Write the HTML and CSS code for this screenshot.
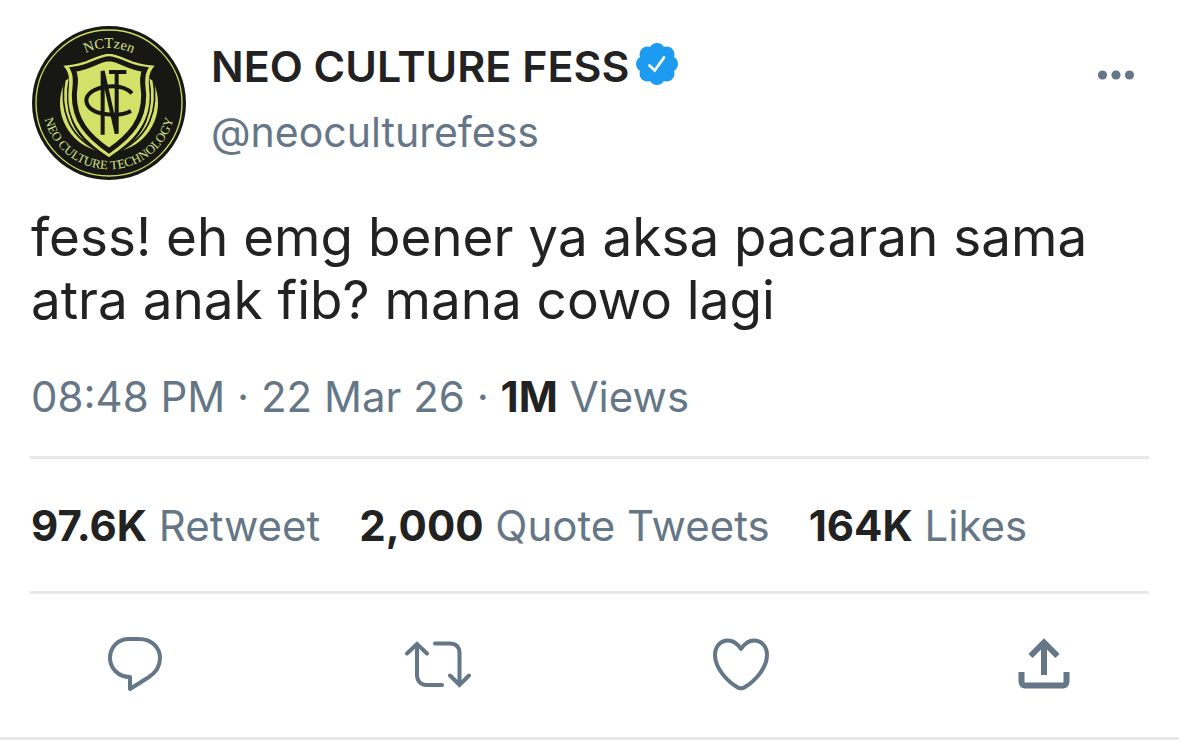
FILE: index.html
```html
<!DOCTYPE html>
<html lang="id">
<head>
<meta charset="utf-8">
<meta name="viewport" content="width=device-width, initial-scale=1">
<title>NEO CULTURE FESS</title>
<link rel="stylesheet" href="styles.css">
</head>
<body>
<article class="tweet">
  <header class="header">
    <svg class="avatar" viewBox="35 33 462 462" role="img" aria-label="NCTzen">
      <defs>
        <path id="arc-top" d="M101 264A165 165 0 0 1 431 264"/>
        <path id="arc-bottom" d="M67 264A199 199 0 0 0 465 264"/>
      </defs>
      <circle cx="266" cy="264" r="231" fill="#171813"/>
      <circle cx="266" cy="264" r="147" fill="#d3e168"/>
      <g fill="none" stroke="#171813">
        <path d="M134 190C116 285 146 362 228 404" stroke-width="5"/>
        <path d="M149 190C130 285 160 364 244 412" stroke-width="8"/>
        <path d="M398 190C416 285 386 362 304 404" stroke-width="5"/>
        <path d="M383 190C402 285 372 364 288 412" stroke-width="8"/>
      </g>
      <path d="M112 100H420V158Q398 190 395 196L266 112L137 196Q134 190 112 158Z" fill="#171813"/>
      <circle cx="266" cy="264" r="219" fill="none" stroke="#cfdd66" stroke-width="4"/>
      <path d="M266 117C228 117 204 148 129 152C153 178 146 205 144 238C142 325 191 377 266 427C341 377 390 325 388 238C386 205 379 178 403 152C328 148 304 117 266 117Z" fill="#d3e168"/>
      <path d="M266 131C234 132 211 158 158 163C171 188 163 214 162 240C161 315 202 363 266 407C330 363 371 315 370 240C369 214 361 188 374 163C321 158 298 132 266 131Z" fill="#d3e168" stroke="#171813" stroke-width="15"/>
      <g fill="none" stroke="#171813" stroke-width="12">
        <path d="M247 359V168L289 356V171M266 171H318"/>
        <path d="M335 235C312 212 283 211 253 216C221 221 198 236 198 256C198 278 222 293 253 297C286 302 313 298 332 288"/>
      </g>
      <g class="seal-text" text-anchor="middle">
        <text font-size="43"><textPath href="#arc-top" startOffset="50%">NCTzen</textPath></text>
        <text font-size="38"><textPath href="#arc-bottom" startOffset="50%">NEO CULTURE TECHNOLOGY</textPath></text>
      </g>
    </svg>
    <div class="author">
      <h1 class="name">NEO CULTURE FESS
        <svg class="verified" viewBox="0 0 42 42" role="img" aria-label="Verified">
          <g fill="#1d9bf0"><circle cx="21" cy="21" r="16"/><circle cx="21" cy="8" r="8"/><circle cx="30.500" cy="11.500" r="8"/><circle cx="34" cy="21" r="8"/><circle cx="30.500" cy="30.500" r="8"/><circle cx="21" cy="34" r="8"/><circle cx="11.500" cy="30.500" r="8"/><circle cx="8" cy="21" r="8"/><circle cx="11.500" cy="11.500" r="8"/></g>
          <path d="M13.500 22.500L18.800 27.500L28 14.500" fill="none" stroke="#fff" stroke-width="2.800" stroke-linecap="round"/>
        </svg>
      </h1>
      <a class="handle" href="#">@neoculturefess</a>
    </div>
    <button class="more" type="button" aria-label="More">
      <svg viewBox="0 0 38 10" width="38" height="10" fill="#657786"><circle cx="5.500" cy="5" r="4.600"/><circle cx="19" cy="5" r="4.600"/><circle cx="32.500" cy="5" r="4.600"/></svg>
    </button>
  </header>
  <p class="body">fess! eh emg bener ya aksa pacaran sama atra anak fib? mana cowo lagi</p>
  <p class="meta">08:48 PM · 22 Mar 26 · <strong>1M</strong> Views</p>
  <div class="stats">
    <span><strong>97.6K</strong> Retweet</span>
    <span><strong>2,000</strong> Quote Tweets</span>
    <span><strong>164K</strong> Likes</span>
  </div>
  <div class="actions">
    <button type="button" aria-label="Reply"><svg viewBox="0 0 66 66"><path d="M27 6H37C50 6 58 15 58 25C58 34 53 40 47 44L28 56V44C16 44 8 35 8 25C8 14 16 6 27 6Z" stroke-linejoin="round"/></svg></button>
    <button type="button" aria-label="Retweet"><svg viewBox="0 0 66 66"><path d="M2 20.500L12 11L22 20.500M12 11V42C12 48 16 52 21 52H37M30 10.500H45C51 10.500 54.500 14 54.500 20V51M45 42.500L54.500 52L64 42.500" stroke-linecap="round"/></svg></button>
    <button type="button" aria-label="Like"><svg viewBox="0 0 66 66"><path d="M33 16C29 10 25 7.500 20 7.500C12 7.500 7 14 7 22C7 35 19 48 29 54C32 56 34 56 37 54C47 48 59 35 59 22C59 14 54 7.500 46 7.500C41 7.500 37 10 33 16Z" stroke-linejoin="round"/></svg></button>
    <button type="button" aria-label="Share"><svg viewBox="0 0 66 66" class="share"><path d="M33 42V10M19.500 23L33 9.500L46.500 23M10.500 39V48.500C10.500 51 12 52.500 14 52.500H52C54 52.500 55.500 51 55.500 48.500V39"/></svg></button>
  </div>
</article>
</body>
</html>
```
FILE: styles.css
```css
* {
  box-sizing: border-box;
}

body {
  margin: 0;
  background: #fff;
  color: #222;
  font-family: Inter, "Liberation Sans", sans-serif;
}

h1,
p {
  margin: 0;
}

button {
  padding: 0;
  border: 0;
  background: none;
  cursor: pointer;
}

svg {
  display: block;
}

.tweet {
  padding: 26px 30px 0;
  border-bottom: 3px solid #e8e8e8;
}

.header {
  display: flex;
  align-items: flex-start;
}

.avatar {
  flex: none;
  width: 154px;
  height: 154px;
  margin: 0 25px 0 2px;
}

.seal-text {
  fill: #d6e38c;
  font-family: "Liberation Serif", serif;
}

.author {
  flex: 1;
  padding-top: 12px;
}

.name {
  display: flex;
  align-items: center;
  gap: 7px;
  font-size: 43px;
  font-weight: 600;
  line-height: 56px;
}

.verified {
  width: 42px;
  height: 42px;
  margin-bottom: 4px;
}

.handle {
  display: block;
  margin-top: 10px;
  color: #657786;
  font-size: 41px;
  line-height: 56px;
  text-decoration: none;
}

.more {
  margin: 44px 14px 0 0;
}

.body {
  margin-top: 26px;
  padding-left: 1px;
  font-size: 53px;
  line-height: 63px;
}

.meta {
  margin-top: 37px;
  padding: 0 1px 31px;
  border-bottom: 3px solid #e8e8e8;
  color: #657786;
  font-size: 42px;
  line-height: 56px;
}

strong {
  color: #222;
  font-weight: 700;
}

.stats {
  display: flex;
  gap: 39px;
  padding: 39px 1px 37px;
  border-bottom: 3px solid #e8e8e8;
  color: #657786;
  font-size: 42px;
  line-height: 56px;
}

.actions {
  display: flex;
  justify-content: space-between;
  padding: 39px 72px 38px;
}

.actions svg {
  width: 66px;
  height: 66px;
  fill: none;
  stroke: #657786;
  stroke-width: 4;
}

.actions .share {
  stroke-width: 6;
}
```
